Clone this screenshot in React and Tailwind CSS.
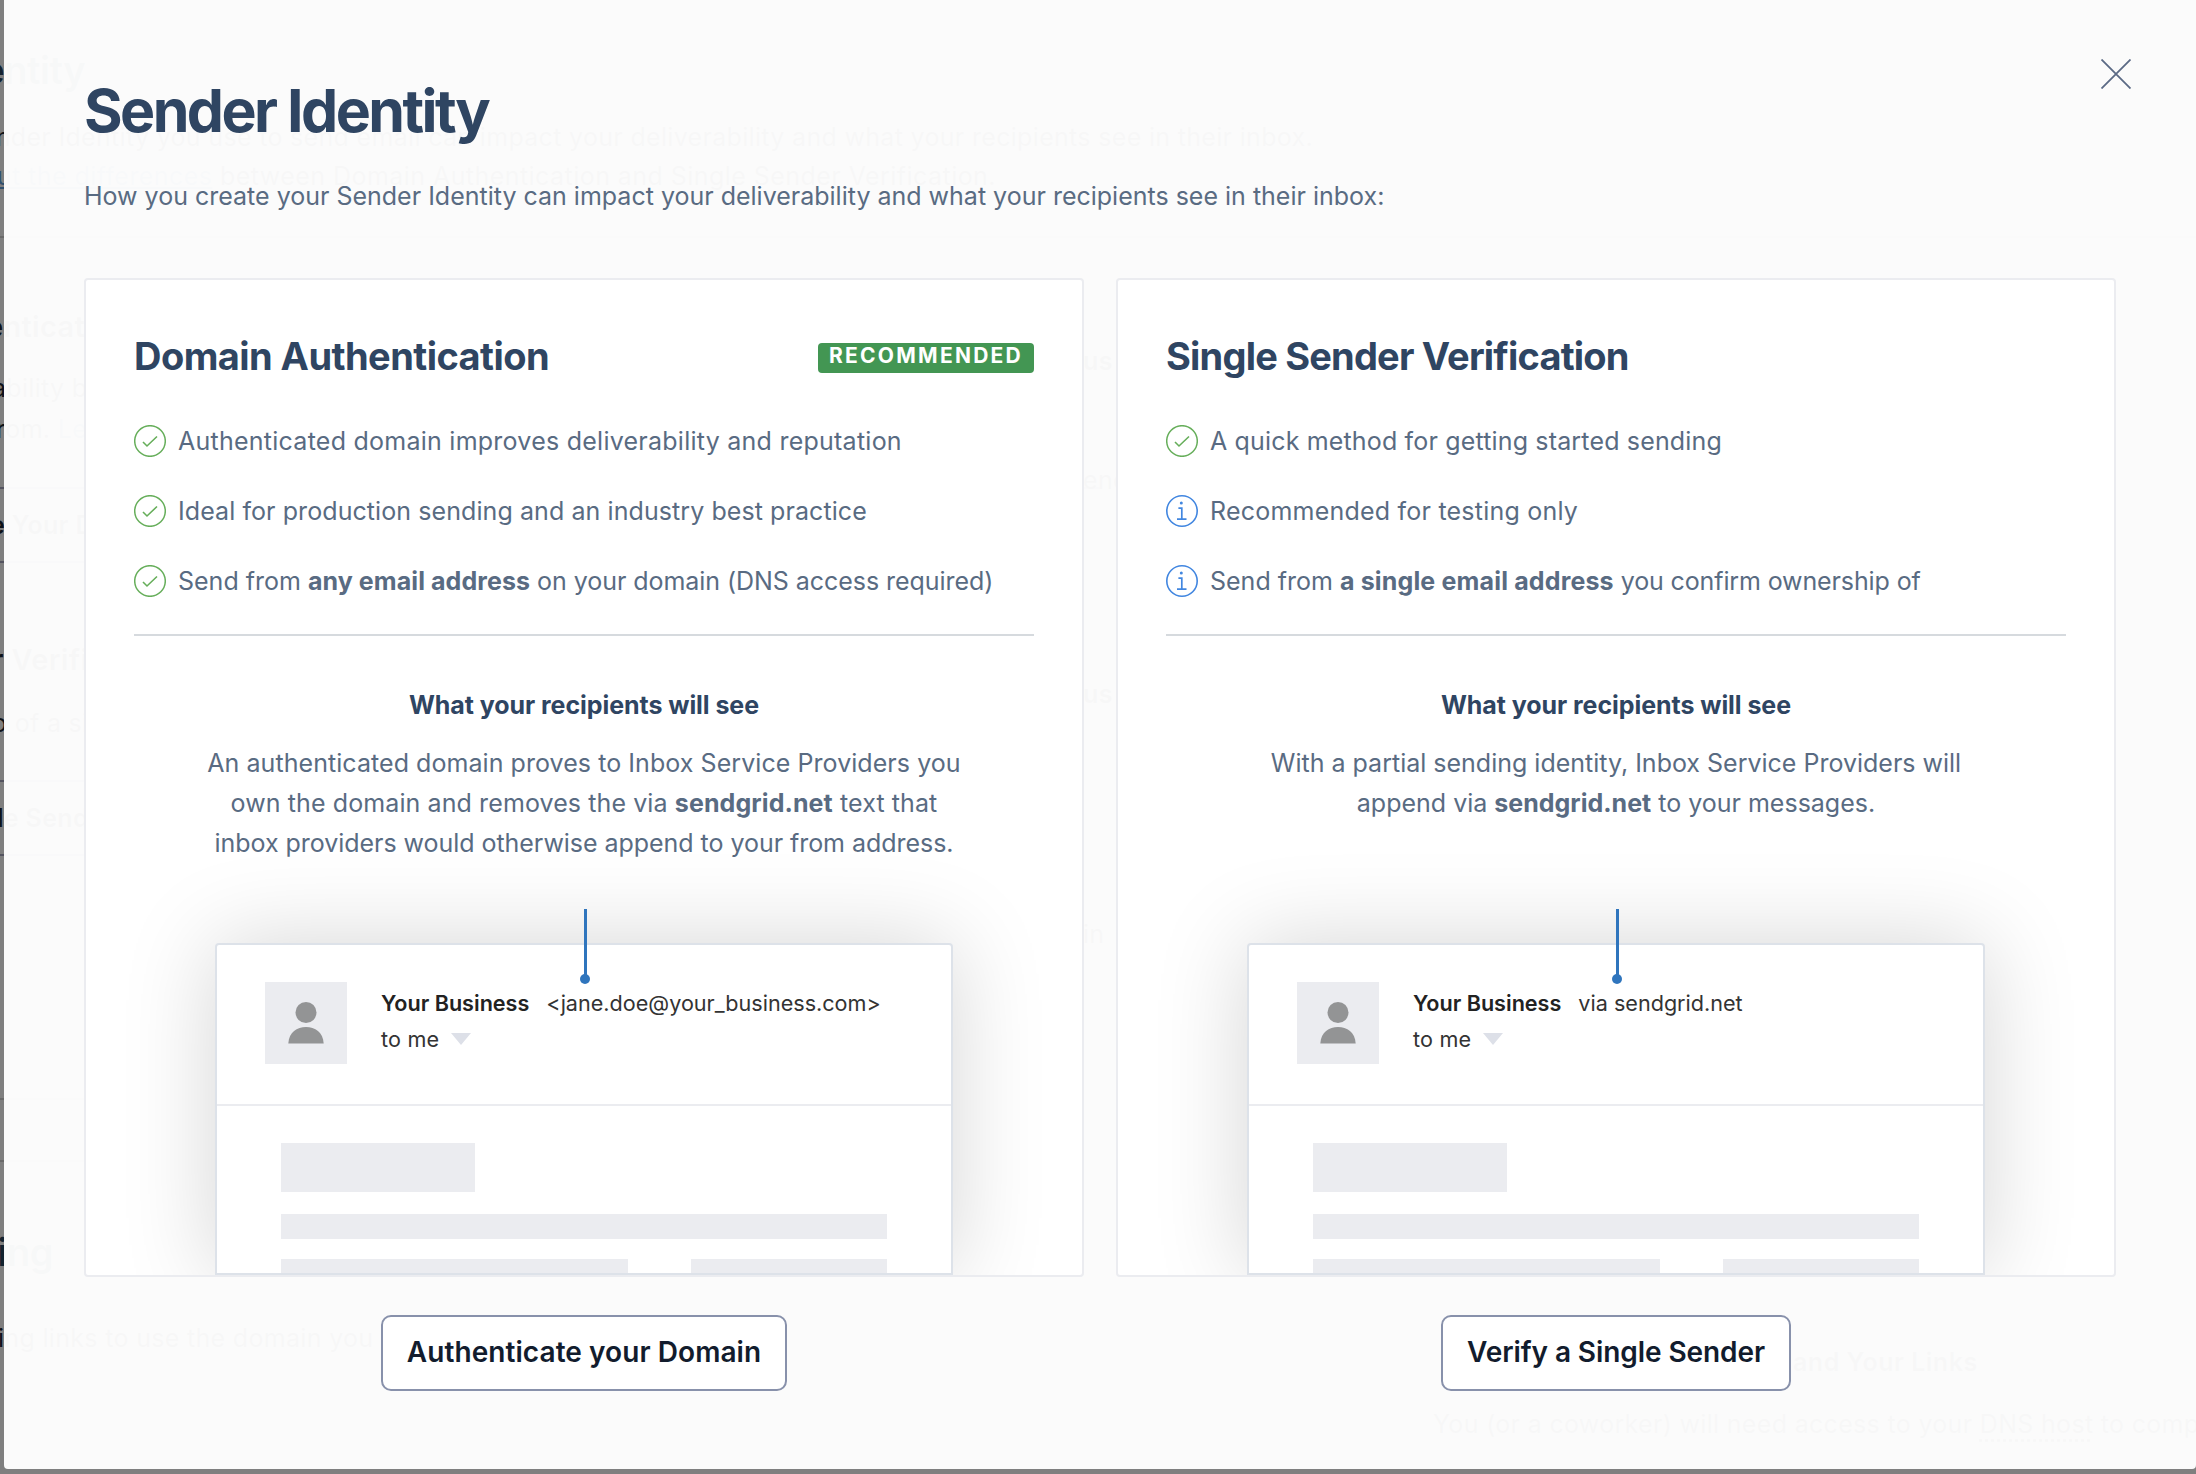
import clsx from 'clsx';

function CheckIcon() {
  return (
    <svg viewBox="0 0 32 32" fill="none" stroke="#66ae5a" className="-mt-[3px] h-8 w-8 shrink-0">
      <circle cx="16" cy="16" r="15.3" strokeWidth="1.5" />
      <path d="M9 17 L13 21 L23 11.5" strokeWidth="1.6" />
    </svg>
  );
}

function InfoIcon() {
  return (
    <svg viewBox="0 0 32 32" fill="none" stroke="#4186e0" className="-mt-[3px] h-8 w-8 shrink-0">
      <circle cx="16" cy="16" r="15.2" strokeWidth="1.6" />
      <circle cx="15.3" cy="8" r="1.5" fill="#4186e0" stroke="none" />
      <path d="M12.4 13.2 H15.8 V24 M11 24.2 H20.5" strokeWidth="1.7" />
    </svg>
  );
}

function Feature({ icon, children }) {
  return (
    <li className="flex h-10 items-center gap-3">
      {icon === 'check' ? <CheckIcon /> : <InfoIcon />}
      <span className="pb-[2px] whitespace-nowrap">{children}</span>
    </li>
  );
}

function EmailPreview({ from }) {
  return (
    <div className="relative mx-auto mt-[80px] h-[332px] w-[738px] rounded-t-[4px] border-2 border-[#dde2e9] bg-white shadow-[0_0_92px_rgba(0,0,0,0.17)]">
      <div className="absolute -top-9 left-[363px] flex flex-col items-center">
        <div className="h-[67px] w-[3px] bg-[#2f75bd]" />
        <div className="-mt-[2px] h-[10px] w-[10px] rounded-full bg-[#2f75bd]" />
      </div>
      <div className="flex h-[161px] border-b-2 border-[#ebecf0] pt-[37px] pl-12 text-[21.6px] leading-9 text-[#333333]">
        <svg viewBox="0 0 82 82" className="h-[82px] w-[82px] shrink-0">
          <rect width="82" height="82" fill="#ebecf0" />
          <circle cx="41" cy="30.5" r="10.5" fill="#939495" />
          <path d="M23.3 61.5 C24 50 32 45 41 45 C50 45 58 50 58.7 61.5 Z" fill="#939495" />
        </svg>
        <div className="pt-[3px] pl-[34px]">
          <div className="flex gap-[17px] whitespace-nowrap">
            <span className="font-semibold text-[#222222]">Your Business</span>
            <span>{from}</span>
          </div>
          <div className="flex items-center gap-3 whitespace-nowrap">
            <span className="tracking-[0.2px]">to me</span>
            <svg viewBox="0 0 20 12" className="h-3 w-5">
              <path d="M0 0 H20 L10 12 Z" fill="#dde0e8" />
            </svg>
          </div>
        </div>
      </div>
      <div className="flex h-[167px] flex-col overflow-hidden pt-[37px] pl-16">
        <div className="h-[49px] w-[194px] shrink-0 bg-[#ebecf0]" />
        <div className="mt-[22px] h-[25px] w-[606px] shrink-0 bg-[#ebecf0]" />
        <div className="mt-5 flex w-[606px] shrink-0 justify-between">
          <div className="h-6 w-[347px] bg-[#ebecf0]" />
          <div className="h-6 w-[196px] bg-[#ebecf0]" />
        </div>
      </div>
    </div>
  );
}

function OptionCard({ title, badge, features, description, from }) {
  return (
    <section className="h-[999px] w-[1000px] overflow-hidden rounded-[4px] border-2 border-[#ebecf0] bg-white px-12 pt-[52px]">
      <div className="flex h-12 items-center justify-between">
        <h2 className={clsx('text-[38px] leading-[46px] font-bold text-[#2f4562]', badge ? 'tracking-[-0.55px]' : 'tracking-[-0.8px]')}>
          {title}
        </h2>
        {badge && (
          <span className="mt-[3px] h-[30px] rounded-[4px] bg-[#439653] pr-[11px] pl-[11px] text-[21px] leading-[26px] font-bold tracking-[2.25px] text-white">
            {badge}
          </span>
        )}
      </div>
      <ul className="mt-[42px] flex flex-col gap-[30px]">{features}</ul>
      <div className="mt-8 h-[2px] bg-[#d6dade]" />
      <h3 className="mt-[49px] text-center font-bold tracking-[-0.06px] text-[#2f4562]">What your recipients will see</h3>
      <p className="mt-[18px] h-[120px] text-center">{description}</p>
      <EmailPreview from={from} />
    </section>
  );
}

function ActionButton({ children }) {
  return (
    <button className="h-[76px] rounded-[10px] border-2 border-[#8891ab] bg-white px-6 pb-[2px] text-[28px] font-semibold text-[#121c2d]">
      {children}
    </button>
  );
}

function Rule({ className }) {
  return <div className={clsx('h-[2px] shrink-0', className)} />;
}

function PageBehind() {
  return (
    <div aria-hidden="true" className="absolute inset-0 overflow-hidden bg-white text-[25px] leading-10 tracking-[0.32px] whitespace-pre text-[#1c2530]">
      <div className="flex flex-col pt-[50px]">
        <div className="flex w-[85px] justify-end text-[38px] font-semibold tracking-[-0.5px] text-[#294661]">Sender Identity</div>
        <div className="mt-[27px] flex w-[1313px] justify-end">
          The Sender Identity you use to send email can impact your deliverability and what your recipients see in their inbox.
        </div>
        <div className="-mt-[1px] flex w-[996px] justify-end tracking-[0.45px]">
          <span className="text-[#5f9fdc] underline">Learn about the differences</span> between Domain Authentication and Single Sender Verification.
        </div>
        <Rule className="mt-10 bg-[#d5d5d5]" />
      </div>
      <div className="flex">
        <div className="w-[130px] shrink-0 pt-[69px]">
          <div className="flex w-[85px] justify-end text-[29px] font-semibold">Domain Authenticat</div>
          <div className="mt-[21px] -ml-2">ability by</div>
          <div className="mt-[1px] -ml-1">
            rom. <span className="text-[#5f9fdc]">Learn</span>
          </div>
          <Rule className="mt-[38px] w-[1100px] bg-[#a8a8c0]" />
          <div className="mt-4 -ml-[10px] font-semibold">e Your Domain</div>
          <Rule className="mt-4 bg-[#a8a8c0]" />
          <div className="mt-[77px] -ml-2 text-[29px] font-semibold">r Verification</div>
          <div className="mt-[23px] -ml-2">o of a single</div>
          <Rule className="mt-[37px] bg-[#a8a8c0]" />
          <div className="mt-4 -ml-[3px] font-semibold">le Sender</div>
          <Rule className="mt-4 bg-[#a8a8c0]" />
          <Rule className="mt-[242px] bg-[#d5d5d5]" />
          <Rule className="mt-[60px] bg-[#d5d5d5]" />
          <div className="mt-[70px] flex w-[53px] justify-end text-[38px] font-semibold tracking-[-0.5px] text-[#294661]">Link Branding</div>
          <div className="mt-[46px] -ml-[2px]">ing links to use the domain you</div>
        </div>
        <div className="ml-[953px] w-[350px] shrink-0 pt-[103px]">
          <div className="font-semibold">us</div>
          <div className="mt-[79px]">end</div>
          <div className="mt-[174px] font-semibold">us</div>
          <div className="mt-[200px]">in</div>
        </div>
        <div className="pt-[1104px]">
          <div className="pl-[360px] font-semibold tracking-[0.5px]">and Your Links</div>
          <div className="mt-[22px]">
            You (or a coworker) will need access to your{' '}
            <span className="underline decoration-dotted underline-offset-[6px]">DNS host</span> to complete
          </div>
        </div>
      </div>
      <div className="absolute inset-0 bg-black/50" />
    </div>
  );
}

export default function App() {
  return (
    <div className="relative h-[1474px] w-[2196px] overflow-hidden font-['Inter',sans-serif]">
      <PageBehind />
      <main className="relative ml-1 h-[1469px] rounded-b-[4px] bg-white/97 pt-[79px] pl-20 text-[25px] leading-10 text-[#596b82]">
        <button aria-label="Close" className="absolute top-[59px] right-[65px]">
          <svg viewBox="0 0 30 30" fill="none" stroke="#5b6a85" strokeWidth="1.8" className="block h-[30px] w-[30px]">
            <path d="M0.5 0.5 L29.5 29.5 M29.5 0.5 L0.5 29.5" />
          </svg>
        </button>
        <h1 className="text-[59px] leading-16 font-bold tracking-[-2.55px] text-[#2f4562]">Sender Identity</h1>
        <p className="mt-[33px]">
          How you create your Sender Identity can impact your deliverability and what your recipients see in their inbox:
        </p>
        <div className="mt-[62px] grid w-[2032px] grid-cols-2 gap-x-8 gap-y-[38px]">
          <OptionCard
            title="Domain Authentication"
            badge="RECOMMENDED"
            features={
              <>
                <Feature icon="check">
                  <span className="tracking-[0.25px]">Authenticated domain improves deliverability and reputation</span>
                </Feature>
                <Feature icon="check">
                  <span className="tracking-[0.08px]">Ideal for production sending and an industry best practice</span>
                </Feature>
                <Feature icon="check">
                  Send from <b className="tracking-[0.08px]">any email address</b>
                  <span className="tracking-[-0.05px]"> on your domain (DNS access required)</span>
                </Feature>
              </>
            }
            description={
              <>
                <span className="tracking-[0.06px]">An authenticated domain proves to Inbox Service Providers you</span>
                <br />
                <span className="tracking-[0.1px]">
                  own the domain and removes the via <b>sendgrid.net</b> text that
                </span>
                <br />
                <span className="tracking-[-0.04px]">inbox providers would otherwise append to your from address.</span>
              </>
            }
            from="<jane.doe@your_business.com>"
          />
          <OptionCard
            title="Single Sender Verification"
            features={
              <>
                <Feature icon="check">
                  <span className="tracking-[0.16px]">A quick method for getting started sending</span>
                </Feature>
                <Feature icon="info">
                  <span className="tracking-[0.22px]">Recommended for testing only</span>
                </Feature>
                <Feature icon="info">
                  Send from <b className="tracking-[0.16px]">a single email address</b>
                  <span className="tracking-[-0.12px]"> you confirm ownership of</span>
                </Feature>
              </>
            }
            description={
              <>
                With a partial sending identity, Inbox Service Providers will
                <br />
                append via <b>sendgrid.net</b> to your messages.
              </>
            }
            from="via sendgrid.net"
          />
          <div className="flex justify-center">
            <ActionButton>
              <span className="tracking-[0.07px]">Authenticate your Domain</span>
            </ActionButton>
          </div>
          <div className="flex justify-center">
            <ActionButton>
              <span className="tracking-[-0.08px]">Verify a Single Sender</span>
            </ActionButton>
          </div>
        </div>
      </main>
    </div>
  );
}
